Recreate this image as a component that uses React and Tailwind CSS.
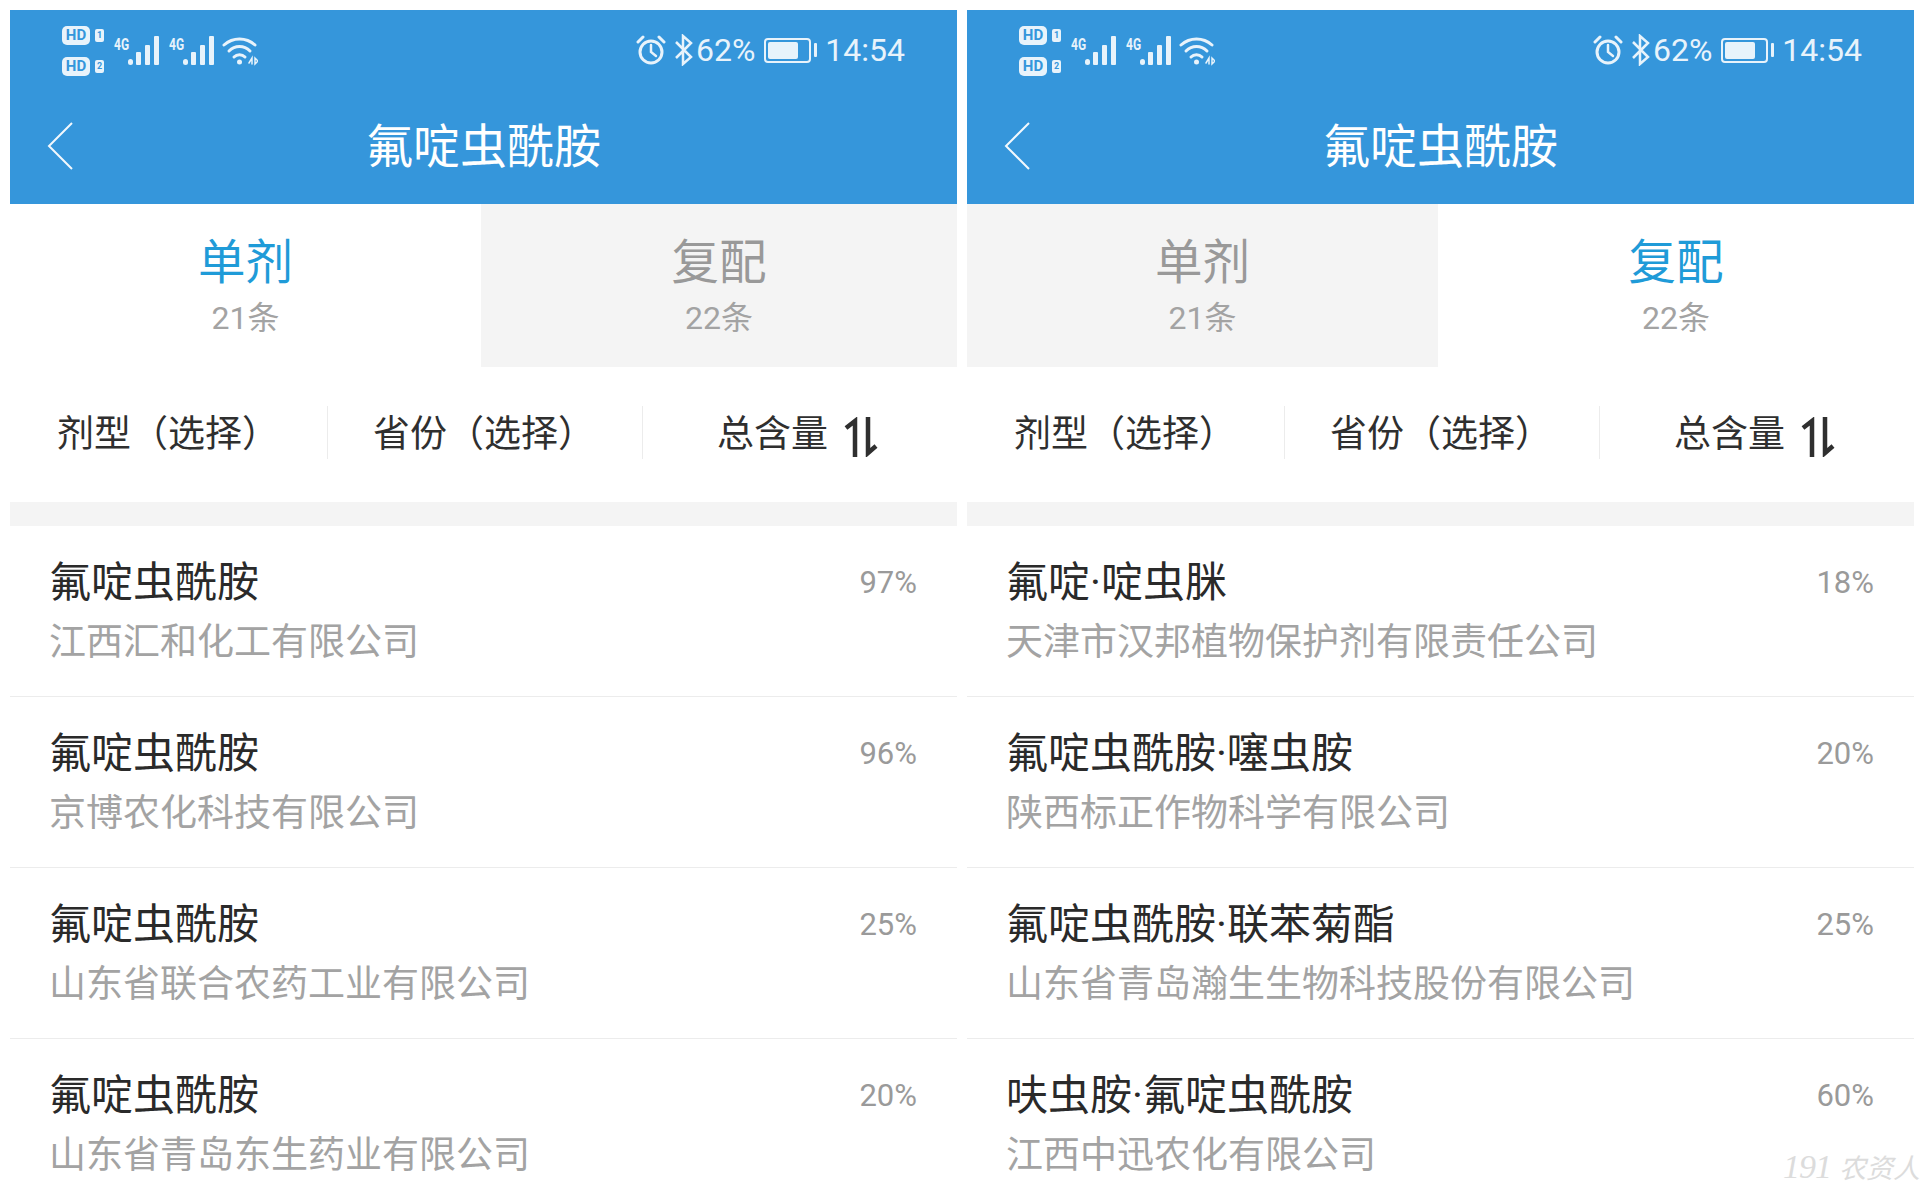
const CJK = "font-['Roboto','Noto_Sans_CJK_SC',sans-serif]";

const LEFT_ROWS = [
  { name: "氟啶虫酰胺", company: "江西汇和化工有限公司", pct: "97%" },
  { name: "氟啶虫酰胺", company: "京博农化科技有限公司", pct: "96%" },
  { name: "氟啶虫酰胺", company: "山东省联合农药工业有限公司", pct: "25%" },
  { name: "氟啶虫酰胺", company: "山东省青岛东生药业有限公司", pct: "20%" },
];

const RIGHT_ROWS = [
  { name: "氟啶·啶虫脒", company: "天津市汉邦植物保护剂有限责任公司", pct: "18%" },
  { name: "氟啶虫酰胺·噻虫胺", company: "陕西标正作物科学有限公司", pct: "20%" },
  { name: "氟啶虫酰胺·联苯菊酯", company: "山东省青岛瀚生生物科技股份有限公司", pct: "25%" },
  { name: "呋虫胺·氟啶虫酰胺", company: "江西中迅农化有限公司", pct: "60%" },
];

function HdBadge({ n }) {
  return (
    <div className="flex items-center gap-[5px] h-[20px]">
      <span className="h-[19px] w-[28px] rounded-[5px] bg-[#e8f3fb] flex items-center justify-center text-[15px] leading-none font-bold text-[#3596db]">
        HD
      </span>
      <span className="h-[13px] w-[9px] rounded-[2px] bg-[#e8f3fb] flex items-center justify-center text-[9px] leading-none font-bold text-[#3596db]">
        {n}
      </span>
    </div>
  );
}

function Signal() {
  return (
    <div className="flex items-start h-[30px]">
      <span className="text-[16px] leading-[16px] font-bold text-[#e8f3fb] mt-[1px] scale-x-75 w-[16px]">4G</span>
      <svg width="31" height="30" viewBox="0 0 31 30" className="text-[#e8f3fb]" fill="currentColor">
        <rect x="0" y="23" width="5" height="6" rx="2.5" />
        <rect x="8" y="16" width="5" height="13" rx="1" />
        <rect x="17" y="9" width="5" height="20" rx="1" />
        <rect x="26" y="0" width="5" height="29" rx="1" />
      </svg>
    </div>
  );
}

function Wifi() {
  return (
    <svg width="36" height="30" viewBox="0 0 36 30" fill="none" stroke="#e8f3fb" strokeWidth="3" strokeLinecap="round">
      <path d="M2 9C11 1 24 1 33 9" />
      <path d="M7 15C13 9 22 9 28 15" />
      <path d="M12 21C15 18 20 18 23 21" />
      <circle cx="17.5" cy="26" r="2.5" fill="#e8f3fb" stroke="none" />
      <path d="M27 27L30 22V28M33 22V28L36 25Z" strokeWidth="1.5" />
    </svg>
  );
}

function Alarm() {
  return (
    <svg width="30" height="30" viewBox="0 0 30 30" fill="none" stroke="#e8f3fb" strokeWidth="3" strokeLinecap="round">
      <circle cx="15" cy="17" r="11" />
      <path d="M15 10V17L20 21" strokeWidth="2.5" />
      <path d="M2 7L7 2M28 7L23 2" />
    </svg>
  );
}

function Bluetooth() {
  return (
    <svg width="20" height="32" viewBox="0 0 20 32" fill="none" stroke="#e8f3fb" strokeWidth="2.5">
      <path d="M2 8L17 23L9 30V2L17 9L2 24" />
    </svg>
  );
}

function Battery() {
  return (
    <div className="flex items-center gap-[3px]">
      <div className="h-[25px] w-[47px] rounded-[4px] border-2 border-[#e8f3fb] p-[2px]">
        <div className="h-full w-[30px] rounded-[2px] bg-[#e8f3fb]" />
      </div>
      <div className="h-[14px] w-[3px] rounded-[1px] bg-[#e8f3fb]" />
    </div>
  );
}

function SortIcon() {
  return (
    <svg width="34" height="40" viewBox="0 0 34 40" fill="none" stroke="#2f2f2f" strokeWidth="4.5">
      <path d="M11 40V4L2 11" />
      <path d="M24 0V36L32 29" />
    </svg>
  );
}

function StatusBar() {
  return (
    <div className="h-[80px] flex items-center justify-between pl-[52px] pr-[52px] text-[#e8f3fb]">
      <div className="flex items-center gap-[8px] mt-[2px]">
        <div className="flex flex-col gap-[11px]">
          <HdBadge n="1" />
          <HdBadge n="2" />
        </div>
        <div className="flex items-center gap-[8px]">
          <Signal />
          <Signal />
        </div>
        <Wifi />
      </div>
      <div className="flex items-center">
        <Alarm />
        <span className="ml-[8px]">
          <Bluetooth />
        </span>
        <span className="text-[32px] leading-none ml-[2px]">62%</span>
        <span className="ml-[9px]">
          <Battery />
        </span>
        <span className="text-[32px] leading-none ml-[8px]">14:54</span>
      </div>
    </div>
  );
}

function Tab({ label, count, active, className }) {
  return (
    <div className={`h-[163px] flex flex-col items-center pt-[32px] ${active ? "bg-white" : "bg-[#f4f4f4]"} ${className}`}>
      <div className={`text-[47.5px] leading-[54px] ${active ? "text-[#1f9bd8]" : "text-[#999999]"}`}>{label}</div>
      <div className="text-[32px] leading-[34px] mt-[11px] text-[#a3a3a3]">{count}</div>
    </div>
  );
}

function FilterCell({ children, divider, className }) {
  return (
    <div className={`relative h-[135px] flex items-center ${className}`}>
      {children}
      {divider && <div className="absolute right-0 top-[39px] h-[53px] w-px bg-[#ececec]" />}
    </div>
  );
}

function Row({ row, last }) {
  return (
    <div className={`h-[171px] shrink-0 pl-[39px] pr-[40px] pt-[32px] flex justify-between ${last ? "" : "border-b border-[#ececec]"}`}>
      <div>
        <div className="text-[42px] leading-[50px] text-[#2a2a2a]">{row.name}</div>
        <div className="text-[37px] leading-[44px] mt-[13px] text-[#a3a3a3]">{row.company}</div>
      </div>
      <div className="text-[31px] leading-[50px] text-[#9a9a9a]">{row.pct}</div>
    </div>
  );
}

function Screen({ activeTab, rows }) {
  return (
    <div className="w-[947px] shrink-0 flex flex-col bg-white">
      <div className="h-[194px] bg-[#3596db] shrink-0">
        <StatusBar />
        <div className="relative h-[66px] mt-[23px] flex items-center justify-center">
          <svg
            className="absolute left-[37px] top-[9px]"
            width="26"
            height="48"
            viewBox="0 0 26 48"
            fill="none"
            stroke="#f2f8fd"
            strokeWidth="2"
          >
            <path d="M25 1L2 24L25 47" />
          </svg>
          <span className="text-[47px] leading-none text-white">氟啶虫酰胺</span>
        </div>
      </div>

      <div className="flex shrink-0">
        <Tab label="单剂" count="21条" active={activeTab === "single"} className="w-[471px]" />
        <Tab label="复配" count="22条" active={activeTab === "mixed"} className="flex-1" />
      </div>

      <div className="flex shrink-0 text-[37px] text-[#2f2f2f]">
        <FilterCell divider className="w-[318px] pl-[47px]">剂型（选择）</FilterCell>
        <FilterCell divider className="w-[315px] pl-[45px]">省份（选择）</FilterCell>
        <FilterCell className="flex-1 pl-[74px]">
          <span>总含量</span>
          <span className="ml-[16px] mt-[5px]">
            <SortIcon />
          </span>
        </FilterCell>
      </div>

      <div className="h-[24px] shrink-0 bg-[#f4f4f4]" />

      {rows.map((row, i) => (
        <Row key={row.company} row={row} last={i === rows.length - 1} />
      ))}
    </div>
  );
}

export default function App() {
  return (
    <div className={`relative h-[1188px] w-[1924px] overflow-hidden bg-white pt-[10px] pl-[10px] flex gap-[10px] ${CJK}`}>
      <Screen activeTab="single" rows={LEFT_ROWS} />
      <Screen activeTab="mixed" rows={RIGHT_ROWS} />
      <div className="absolute right-[4px] bottom-[4px] text-[27px] leading-none italic text-[#dcdcdc]">
        <span className="font-['Liberation_Serif',serif] text-[34px] tracking-[-1px]">191</span>
        <span className="ml-[8px]">农资人</span>
      </div>
    </div>
  );
}
